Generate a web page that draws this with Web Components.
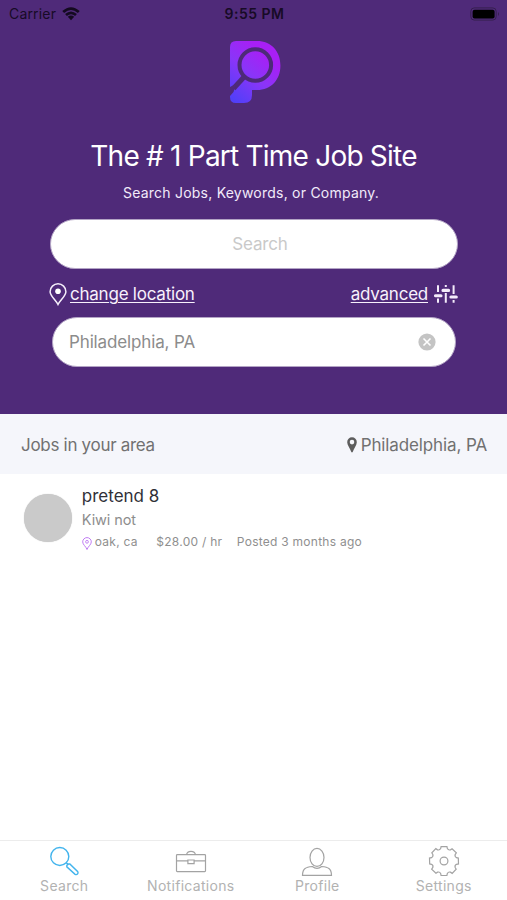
<!DOCTYPE html>
<html lang="en">
<head>
<meta charset="utf-8">
<title>Part Time Jobs</title>
<style>
html,body{margin:0;height:100%;background:#fff}
body{font-family:Inter,"Liberation Sans",sans-serif}
</style>
</head>
<body>
<job-app></job-app>
<script>
const define = (name, html) => {
  const t = document.createElement('template');
  t.innerHTML = html;
  customElements.define(name, class extends HTMLElement {
    constructor() {
      super();
      this.attachShadow({mode: 'open'}).append(t.content.cloneNode(true));
    }
  });
};

/* Icons */
const gear = (() => {
  const p = [];
  for (let i = 0; i < 8; i++) {
    const at = (r, d) => { const a = (i * 45 + d) * Math.PI / 180; return (16 + r * Math.sin(a)).toFixed(2) + ' ' + (16 - r * Math.cos(a)).toFixed(2); };
    p.push((i ? 'L' : 'M') + at(12.9, -15) + 'L' + at(14.6, -11.5) + 'L' + at(14.8, 11.5) + 'L' + at(12.9, 15) + 'Q' + at(11.4, 22.5) + ' ' + at(12.9, 30));
  }
  return p.join('') + 'Z';
})();
const icons = {
  logo: [51, 62, `<defs><linearGradient id="g" x1=".7" y1=".2" x2=".15" y2="1"><stop offset="0" stop-color="#a81ff5"/><stop offset=".45" stop-color="#8a35f8"/><stop offset="1" stop-color="#523ff8"/></linearGradient></defs><path d="M6 0H27C41 0 50.4 10 50.4 24.5S41 49 27 49H22V54Q22 62 14 62H6Q0 62 0 56V6Q0 0 6 0Z" fill="url(#g)"/><circle cx="25.3" cy="24" r="15.8" fill="none" stroke="#4d2a78" stroke-width="4"/><path d="M14 36 3.5 47.5" stroke="#4d2a78" stroke-width="5"/><path d="M0 46 6 43 3.5 51 0 55Z" fill="#4f2a79"/>`],
  wifi: [18, 14, `<path d="M1.2 5.1Q9-2 16.8 5.1M4 8.1Q9 3.5 14 8.1" fill="none" stroke="#140a20" stroke-width="2.7"/><path d="M5.8 9.8Q9 7.2 12.2 9.8L9 13.2Z" fill="#140a20"/>`],
  battery: [30, 14, `<rect x=".8" y=".9" width="25.4" height="12.2" rx="3.5" fill="none" stroke="#36204f"/><rect x="2.6" y="2.7" width="22" height="8.8" rx="2" fill="#000"/><path d="M28 5Q30 7 28 9Z" fill="#36204f"/>`],
  pin: [18, 23, `<path d="M9 21.5C6.5 16.5 1.1 13 1.1 8.7A7.9 7.9 0 0 1 16.9 8.7C16.9 13 11.5 16.5 9 21.5Z" fill="none" stroke="#f5eefb" stroke-width="1.5"/><circle cx="9" cy="8.3" r="2.8" fill="#fff"/>`],
  sliders: [24, 20, `<path d="M4 1.2V8M4 14.5V18.8M11.8 1V3M11.8 9V18.8M19.6 1.2V10M19.6 16V18.8" stroke="#f3ebfa" stroke-width="2"/><path d="M1.5 11.8H7M9 6.4H14.6M16.9 13H22.3" stroke="#f3ebfa" stroke-width="3.1" stroke-linecap="round"/>`],
  clear: [18, 18, `<circle cx="9" cy="9" r="8.6" fill="#c4c4c4"/><path d="M5.5 5.5 12.5 12.5M12.5 5.5 5.5 12.5" stroke="#fff" stroke-width="1.6"/>`],
  marker: [10, 16, `<path fill-rule="evenodd" d="M5 .3A4.8 4.8 0 0 1 9.8 5.2C9.8 8 7 11 5.8 14.8Q5 16 4.2 14.8C3 11 .2 8 .2 5.2A4.8 4.8 0 0 1 5 .3ZM5 2.8A2.3 2.3 0 1 0 5 7.4 2.3 2.3 0 0 0 5 2.8Z" fill="#5d5d5d"/>`],
  spot: [10, 14, `<path d="M5 12.5C4 9.5.7 7.6.7 4.9A4.3 4.3 0 0 1 9.3 4.9C9.3 7.6 6 9.5 5 12.5Z" fill="none" stroke="#c07cf3"/><circle cx="5" cy="4.8" r="1.4" fill="none" stroke="#c07cf3" stroke-width=".9"/>`],
  search: [32, 32, `<g fill="none" stroke="#42b4ed" stroke-width="1.4"><circle cx="11.8" cy="11.5" r="9"/><path d="M18.3 17.7 20.5 20M18.8 21.8Q18.5 20.5 19.5 19.6 20.5 18.7 21.8 19L29.8 26.8Q30.5 28 29.5 29 28.5 30 27.1 29.3Z"/></g>`],
  briefcase: [32, 32, `<g fill="none" stroke="#a3a3a3" stroke-width="1.2"><rect x="1.5" y="9.6" width="29" height="17" rx=".8"/><path d="M1.5 15.9H12.9M19.1 15.9H30.5M12.9 15V18.7H19.1V15ZM11.6 9.6Q12 6.3 16 6.3T20.4 9.6"/></g>`],
  profile: [32, 32, `<g fill="none" stroke="#a3a3a3" stroke-width="1.2"><ellipse cx="16" cy="12.4" rx="7" ry="9"/><path d="M11.3 21.5Q16 25.4 20.7 21.5C27 22.2 30.4 23 30.5 30.4H1.5C1.6 23 5 22.2 11.3 21.5Z"/></g>`],
  settings: [32, 32, `<g fill="none" stroke="#a3a3a3" stroke-width="1.2"><path d="${gear}"/><circle cx="16" cy="16" r="3.9"/></g>`]
};
customElements.define('ui-icon', class extends HTMLElement {
  connectedCallback() {
    if (this.shadowRoot) return;
    const [w, h, body] = icons[this.getAttribute('name')];
    this.attachShadow({mode: 'open'}).innerHTML =
      `<style>:host{display:block;flex:none;width:${w}px;height:${h}px}svg{display:block}</style><svg width="${w}" height="${h}" viewBox="0 0 ${w} ${h}">${body}</svg>`;
  }
});

define('status-bar', `<style>
:host{display:grid;grid-template-columns:1fr auto 1fr;align-items:center;height:28px;padding:0 7px 1px 9px;color:#170b26;box-sizing:border-box}
.l{display:flex;align-items:center;gap:6px;font-size:14px;letter-spacing:.18px}
.t{font-size:14px;font-weight:600;letter-spacing:.5px}
ui-icon[name=battery]{justify-self:end}
</style><div class="l"><span>Carrier</span><ui-icon name="wifi"></ui-icon></div><span class="t">9:55 PM</span><ui-icon name="battery"></ui-icon>`);

define('pill-field', `<style>
:host{display:flex;align-items:center;height:50px;box-sizing:border-box;border-radius:25px;background:#fff;border:1px solid #b3a4c5;font-size:17px;letter-spacing:-.14px}
</style><slot></slot>`);

define('link-button', `<style>
:host{display:flex;align-items:center;color:#f7f1fc;font-size:17px;line-height:22px;letter-spacing:-.23px}
.u{text-decoration:underline;text-decoration-thickness:1px;text-underline-offset:2px}
</style><slot name="before"></slot><span class="u"><slot></slot></span><slot name="after"></slot>`);

define('search-hero', `<style>
:host{display:flex;flex-direction:column;height:414px;background:#4f2a79;box-sizing:border-box}
.logo{align-self:center;margin:13px 0 0 3px}
h1{margin:34px 0 0;font-weight:400;font-size:28px;line-height:38px;text-align:center;color:#fff;letter-spacing:-.78px}
p{margin:9px 5px 0 0;font-size:14px;line-height:18px;text-align:center;color:#f2eafa;letter-spacing:.23px}
.q{margin:17px 49px 0 50px;justify-content:center;color:#c9c9c9;padding-left:12px}
.links{display:flex;justify-content:space-between;margin:13px 49px 0 49px;height:24px;align-items:center}
.loc{margin:11px 51px 0 52px;justify-content:space-between;padding:0 19px 0 16px;color:#8c8c8c}
.pin{margin-right:3px}.sl{margin-left:6px}
</style><status-bar></status-bar><ui-icon class="logo" name="logo"></ui-icon>
<h1>The # 1 Part Time Job Site</h1><p>Search Jobs, Keywords, or Company.</p>
<pill-field class="q"><span>Search</span></pill-field>
<div class="links"><link-button><ui-icon class="pin" slot="before" name="pin"></ui-icon>change location</link-button><link-button>advanced<ui-icon class="sl" slot="after" name="sliders"></ui-icon></link-button></div>
<pill-field class="loc"><span>Philadelphia, PA</span><ui-icon name="clear"></ui-icon></pill-field>`);

define('area-header', `<style>
:host{display:flex;justify-content:space-between;align-items:center;height:60px;padding:2px 20px 0 21px;box-sizing:border-box;background:#f5f6fb;font-size:17px;letter-spacing:-.3px;color:#717171}
.r{display:flex;align-items:center;gap:4px;letter-spacing:-.12px}
</style><span>Jobs in your area</span><span class="r"><ui-icon name="marker"></ui-icon><slot></slot></span>`);

define('job-card', `<style>
:host{display:flex;padding:10px 20px 0 23.5px;gap:10.3px}
.a{width:48px;height:48px;border-radius:50%;background:#cacaca;box-shadow:0 0 1px #bbb;margin-top:10px;flex:none}
.b{display:flex;flex-direction:column}
.t{font-size:17px;line-height:24px;color:#303038}
.c{font-size:14.5px;line-height:24px;color:#8d8d8d;letter-spacing:-.1px}
.m{display:flex;align-items:center;font-size:12px;line-height:20px;color:#8f8f8f;letter-spacing:.26px}
.m ui-icon{margin:3px 3px 0 0}.p{margin-left:18.5px}.d{margin-left:14.5px}
</style><div class="a"></div><div class="b"><span class="t"><slot name="title"></slot></span><span class="c"><slot name="company"></slot></span>
<div class="m"><ui-icon name="spot"></ui-icon><span><slot name="place"></slot></span><span class="p"><slot name="pay"></slot></span><span class="d"><slot name="date"></slot></span></div></div>`);

define('tab-item', `<style>
:host{display:flex;flex-direction:column;align-items:center;flex:1;color:#b2b2b2;font-size:14px;line-height:18px;letter-spacing:.3px}
</style><slot name="icon"></slot><span><slot></slot></span>`);

define('tab-bar', `<style>
:host{display:flex;height:60px;box-sizing:border-box;border-top:1px solid #ececec;padding:4px 0 0 1px}
</style><tab-item><ui-icon slot="icon" name="search"></ui-icon>Search</tab-item><tab-item><ui-icon slot="icon" name="briefcase"></ui-icon>Notifications</tab-item><tab-item><ui-icon slot="icon" name="profile"></ui-icon>Profile</tab-item><tab-item><ui-icon slot="icon" name="settings"></ui-icon>Settings</tab-item>`);

define('job-app', `<style>
:host{display:flex;flex-direction:column;width:507px;height:900px;overflow:hidden;background:#fff}
main{flex:1}
</style><search-hero></search-hero><area-header>Philadelphia, PA</area-header>
<main><job-card><span slot="title">pretend 8</span><span slot="company">Kiwi not</span><span slot="place">oak, ca</span><span slot="pay">$28.00 / hr</span><span slot="date">Posted 3 months ago</span></job-card></main>
<tab-bar></tab-bar>`);
</script>
</body>
</html>
